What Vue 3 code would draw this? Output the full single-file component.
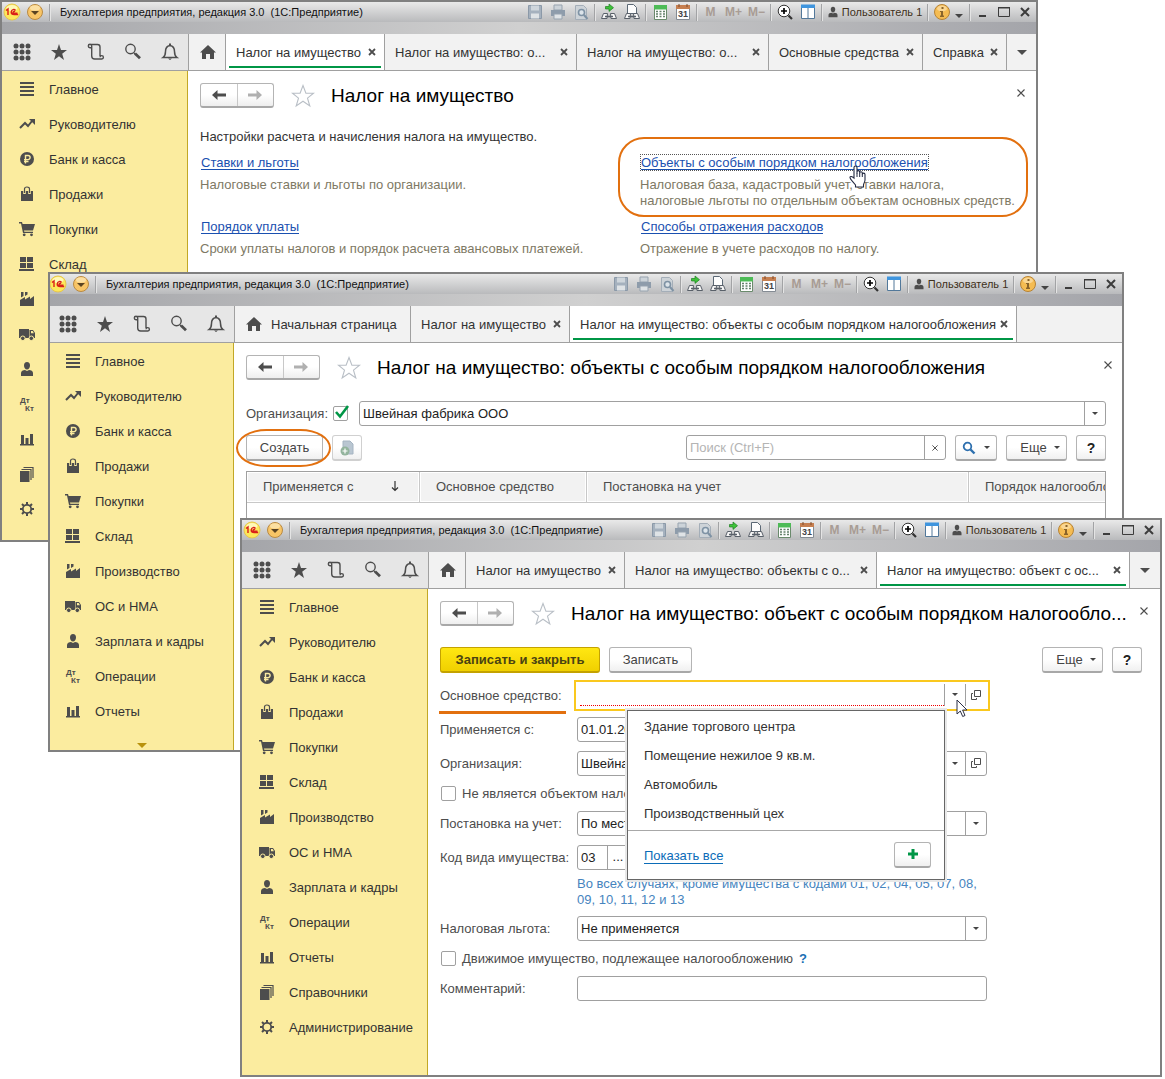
<script setup>
import { ref } from 'vue'

const sections = [
  ['list', 'Главное'],
  ['trend', 'Руководителю'],
  ['ruble', 'Банк и касса'],
  ['bag', 'Продажи'],
  ['cart', 'Покупки'],
  ['store', 'Склад'],
  ['factory', 'Производство'],
  ['truck', 'ОС и НМА'],
  ['person', 'Зарплата и кадры'],
  ['dtkt', 'Операции'],
  ['chart', 'Отчеты'],
  ['books', 'Справочники'],
  ['gear', 'Администрирование'],
]

const windows = [
  {
    id: 'tax',
    heading: 'Налог на имущество',
    sections,
    more: false,
    tabs: [
      { home: true, width: 37 },
      { text: 'Налог на имущество', width: 159, active: true },
      { text: 'Налог на имущество: о...', width: 192 },
      { text: 'Налог на имущество: о...', width: 192 },
      { text: 'Основные средства', width: 154 },
      { text: 'Справка', width: 84 },
    ],
    overflow: true,
  },
  {
    id: 'objects',
    heading: 'Налог на имущество: объекты с особым порядком налогообложения',
    sections: sections.slice(0, 11),
    more: true,
    tabs: [
      { home: true, text: 'Начальная страница', width: 176 },
      { text: 'Налог на имущество', width: 159 },
      { text: 'Налог на имущество: объекты с особым порядком налогообложения', width: 447, active: true },
    ],
    overflow: false,
  },
  {
    id: 'object',
    heading: 'Налог на имущество: объект с особым порядком налогообло...',
    sections,
    more: false,
    tabs: [
      { home: true, width: 37 },
      { text: 'Налог на имущество', width: 159 },
      { text: 'Налог на имущество: объекты с о...', width: 252 },
      { text: 'Налог на имущество: объект с ос...', width: 253, active: true },
    ],
    overflow: true,
  },
]

const tools = ['grid', 'star', 'scroll', 'search', 'bell']
const toolNames = ['Все функции', 'Избранное', 'История', 'Поиск', 'Оповещения']

const links = [
  { text: 'Ставки и льготы', lines: ['Налоговые ставки и льготы по организации.'] },
  {
    text: 'Объекты с особым порядком налогообложения',
    lines: ['Налоговая база, кадастровый учет, ставки налога,', 'налоговые льготы по отдельным объектам основных средств.'],
    marked: true,
  },
  { text: 'Порядок уплаты', lines: ['Сроки уплаты налогов и порядок расчета авансовых платежей.'] },
  { text: 'Способы отражения расходов', lines: ['Отражение в учете расходов по налогу.'] },
]

const assets = ['Здание торгового центра', 'Помещение нежилое 9 кв.м.', 'Автомобиль', 'Производственный цех']

const useOrg = ref(true)
const filter = ref('')
const asset = ref('')
const startDate = ref('01.01.2017')
const organization = ref('Швейная фабрика ООО')
const kindCode = ref('03')
const comment = ref('')
const notTaxed = ref(false)
const movable = ref(false)
</script>

<template>
  <svg class="defs" width="0" height="0" aria-hidden="true">
    <symbol id="i-list" viewBox="0 0 16 16"><path d="M1 1h14v2H1zM1 5h14v2H1zM1 9h14v2H1zM1 13h14v2H1z" /></symbol>
    <symbol id="i-trend" viewBox="0 0 16 16"><path d="M1 12l5-5 3 3 4-5" fill="none" stroke="currentColor" stroke-width="2" /><path d="M10 3h6v6z" /></symbol>
    <symbol id="i-ruble" viewBox="0 0 16 16"><circle cx="8" cy="8" r="7" /><path d="M6.500 12.500V4.500h2.500a2 2 0 0 1 0 4.200H5M5 10.600h4.500" fill="none" stroke="#fbec9f" stroke-width="1.400" /></symbol>
    <symbol id="i-bag" viewBox="0 0 16 16"><path d="M2 5h12v10H2z" /><path d="M5.500 8V3a2.500 2 0 0 1 5 0v5" fill="none" stroke="#fbec9f" stroke-width="2.600" /><path d="M5.500 7V3a2.500 2 0 0 1 5 0v4" fill="none" stroke="currentColor" stroke-width="1.200" /></symbol>
    <symbol id="i-cart" viewBox="0 0 16 16"><path d="M0 1h3l.6 2H16l-2 6.500H5l.3 1.200H14V12H4L2 2.400H0z" /><circle cx="5.200" cy="13.800" r="1.400" /><circle cx="12.500" cy="13.800" r="1.400" /></symbol>
    <symbol id="i-store" viewBox="0 0 16 16"><path d="M1 1h6v5H1zM8 1h6v5H8zM1 7h6v5H1zM8 7h6v5H8zM0 13h15v2H0z" /></symbol>
    <symbol id="i-factory" viewBox="0 0 16 16"><path d="M1 15V9l5-3v2.500L11 5.500V8l4-3v10zM2 1h2.500v4L2 6.500zM6 1h2.500v2.500L6 5z" /></symbol>
    <symbol id="i-truck" viewBox="0 0 16 16"><path d="M0 3h10v9H0zM10.500 4H14l2 3v5h-5.500z" /><path d="M12 5h1.700l1.200 2.300H12z" fill="#fbec9f" /><circle cx="3.800" cy="12.300" r="2.300" stroke="#fbec9f" /><circle cx="12.300" cy="12.300" r="2.300" stroke="#fbec9f" /></symbol>
    <symbol id="i-person" viewBox="0 0 16 16"><path d="M8 1c2 0 3 1.500 3 3.500S9.800 8.500 8 8.500 5 6.500 5 4.500 6 1 8 1zM2 15v-3c0-2 2-2.800 4-3l2 1 2-1c2 .2 4 1 4 3v3z" /></symbol>
    <symbol id="i-dtkt" viewBox="0 0 16 16"><text x="1" y="7" class="mini">Дт</text><text x="6" y="15" class="mini">Кт</text></symbol>
    <symbol id="i-chart" viewBox="0 0 16 16"><path d="M2 4h3v9H2zM6.500 7h3v6h-3zM11 3h3v10h-3zM1 13h14v1.500H1z" /></symbol>
    <symbol id="i-books" viewBox="0 0 16 16"><path d="M1 5h9.500v11H1z" /><path d="M2.500 3.500H12V14M4.500 1.500H14V12" fill="none" stroke="currentColor" stroke-width="1.200" /></symbol>
    <symbol id="i-gear" viewBox="0 0 16 16"><circle cx="8" cy="8" r="4.200" fill="none" stroke="currentColor" stroke-width="1.800" /><path d="M8 4V1M8 15v-3M1 8h3M12 8h3M3 3l2.200 2.200M10.800 10.800L13 13M13 3l-2.200 2.200M5.200 10.800L3 13" stroke="currentColor" stroke-width="2" /></symbol>

    <symbol id="i-grid" viewBox="0 0 20 20"><g><circle v-for="n in 9" :key="n" :cx="4 + ((n - 1) % 3) * 6" :cy="4 + Math.floor((n - 1) / 3) * 6" r="2.500" /></g></symbol>
    <symbol id="i-star" viewBox="0 0 20 20"><path d="M10 2l2 6h6l-4.800 3.800L15 18l-5-3.800L5 18l1.800-6.200L2 8h6z" /></symbol>
    <symbol id="i-scroll" viewBox="0 0 20 20"><path d="M5.700 4a1.700 1.700 0 1 0-1.700 1.700h1.700M4 2.500h7.500q2.500 0 2.500 2.500v9M5.700 4v10q0 3 3 3h7.300M14 15.200a1.700 1.700 0 1 1 1.800 1.800" fill="none" stroke="currentColor" stroke-width="1.400" /></symbol>
    <symbol id="i-search" viewBox="0 0 20 20"><circle cx="7.500" cy="7" r="4.700" fill="none" stroke="currentColor" stroke-width="1.400" /><path d="M11 11l1 1" stroke="currentColor" stroke-width="1.400" /><path d="M12 11.500l5 4.700" stroke="currentColor" stroke-width="2.800" /></symbol>
    <symbol id="i-bell" viewBox="0 0 20 20"><path d="M3 15.500h14c-2-1.500-2.500-3-2.500-6 0-3.500-1.500-5.500-4.500-6-3 .5-4.500 2.500-4.500 6 0 3-.5 4.500-2.500 6z" fill="none" stroke="currentColor" stroke-width="1.500" /><path d="M9 1.500h2v2H9zM8 16.500h4L10 18z" /></symbol>
    <symbol id="i-home" viewBox="0 0 16 16"><path d="M8 1l8 7.500h-2V15h-4v-5H6v5H2V8.500H0z" /></symbol>
    <symbol id="i-close" viewBox="0 0 8 8"><path d="M1 1l6 6M7 1L1 7" stroke="currentColor" stroke-width="1.800" /></symbol>
    <symbol id="i-thin" viewBox="0 0 8 8"><path d="M.5.5l7 7M7.500.5l-7 7" stroke="currentColor" stroke-width="1.100" /></symbol>
    <symbol id="i-down" viewBox="0 0 8 4"><path d="M0 0h8L4 4z" /></symbol>
    <symbol id="i-arrow" viewBox="0 0 14 12"><path d="M0 6l5.500-5v3.600H14v2.800H5.500V11z" /></symbol>
    <symbol id="i-fav" viewBox="0 0 24 24"><path d="M12 1.500l2.900 7.700h7.600l-6 4.900 2.300 7.900-6.800-4.800L5.200 22l2.300-7.900-6-4.900h7.600z" fill="#fff" stroke="#b9bfc6" stroke-width="1.100" /></symbol>
    <symbol id="i-open" viewBox="0 0 10 10"><path d="M3.500.5h6v6h-6zM2 3.500H.5v6h5V8" fill="none" stroke="currentColor" /></symbol>

    <symbol id="t-logo" viewBox="0 0 18 18"><circle cx="9" cy="9" r="8" fill="#fde85a" stroke="#e6c64e" /><ellipse cx="9" cy="5" rx="5.500" ry="3" fill="#fff9b8" /><path d="M3 7.500l2-1.500v6M12.500 7.500c-1-1.500-4-1.500-4.300 1.500 0 2 1.500 2.500 3 2.500h4M12 8.700c-1-.7-2 0-2 .8s.8.8 1.500.8h3" fill="none" stroke="#d9201a" stroke-width="1.400" /></symbol>
    <symbol id="t-menu" viewBox="0 0 18 18"><circle cx="9" cy="9" r="7.500" fill="#f8c566" stroke="#b98a43" /><ellipse cx="9" cy="5" rx="5" ry="2.800" fill="#fce0a2" /><path d="M5 8h8l-4 4z" fill="#5a4422" /></symbol>
    <symbol id="t-save" viewBox="0 0 18 18"><path d="M2.500 2.500h13v13h-13z" fill="#a5b1be" stroke="#8b99a8" /><path d="M5 2.500h8v5H5z" fill="#cfd6dc" /><path d="M5 10.500h8v5H5z" fill="#dfe3e6" /></symbol>
    <symbol id="t-print" viewBox="0 0 18 18"><path d="M5 2h8v5H5z" fill="#ccd3d9" stroke="#97a3af" /><path d="M2 7h14v6H2z" fill="#8e9cab" /><path d="M5 11h8v5H5z" fill="#dfe3e6" stroke="#97a3af" /></symbol>
    <symbol id="t-preview" viewBox="0 0 18 18"><path d="M3.500 2.500h8l3 3v11h-11z" fill="#cdd3d8" stroke="#a4aeb8" /><circle cx="9.500" cy="9.500" r="3" fill="#dce4ea" stroke="#7e92a4" stroke-width="1.600" /><path d="M12 12l3.500 4" stroke="#7e92a4" stroke-width="2" /></symbol>
    <symbol id="t-get" viewBox="0 0 18 18"><path d="M5.500 3.500h3.500V1l4.500 3.700L9 8.400V6H5.500z" fill="#3ec23a" stroke="#1e7f21" stroke-width=".7" /><path d="M3.500 10.500h4l-.5 5H1.500zM10.500 10.500h4l2 5H11z" fill="#f5f5f5" stroke="#596069" /><path d="M5 13.500h8" stroke="#596069" stroke-width="1.500" /></symbol>
    <symbol id="t-put" viewBox="0 0 18 18"><path d="M4.500 1.500h6l3 3v6h-9z" fill="#fdfdfd" stroke="#5b6875" /><path d="M3.500 10.500h4l-.5 5H1.500zM10.500 10.500h4l2 5H11z" fill="#f5f5f5" stroke="#596069" /><path d="M5 13.500h8" stroke="#596069" stroke-width="1.500" /></symbol>
    <symbol id="t-calc" viewBox="0 0 18 18"><path d="M3.500 2.500h12v14h-12z" fill="#fff" stroke="#6a8a6c" /><path d="M3 2h13v4.500H3z" fill="#4dbb56" /><path d="M5 8.500h9M5 11h9M5 13.500h9" stroke="#63806a" stroke-width="1.500" stroke-dasharray="2 1.500" /></symbol>
    <symbol id="t-date" viewBox="0 0 18 18"><path d="M2.500 3.500h13v13h-13z" fill="#fff" stroke="#848b93" /><path d="M2 2h14v4H2z" fill="#c67f50" /><path d="M5 1v3M13 1v3" stroke="#7d4a29" /><text x="9" y="14" text-anchor="middle" class="day">31</text></symbol>
    <symbol id="t-zoom" viewBox="0 0 18 18"><circle cx="8" cy="8" r="5.800" fill="#fff" stroke="#333" /><path d="M8 5v6M5 8h6" stroke="#000" stroke-width="1.700" /><path d="M12.500 12.500l3.500 3.500" stroke="#333" stroke-width="2.200" /></symbol>
    <symbol id="t-split" viewBox="0 0 18 18"><path d="M2.500 2.500h13v13h-13z" fill="#fff" stroke="#52789a" /><path d="M2 1.500h14V5H2z" fill="#3f95de" /><path d="M9 5v11" stroke="#52789a" /></symbol>
    <symbol id="t-info" viewBox="0 0 18 18"><circle cx="9" cy="9" r="7.500" fill="#f5bc52" stroke="#b78335" /><ellipse cx="9" cy="5.500" rx="5" ry="3" fill="#fad692" /><path d="M8.500 4h2v2h-2zM7 8h3v4.500h1V14H7v-1.500h1V9H7z" fill="#8a642a" /></symbol>
    <symbol id="t-min" viewBox="0 0 14 14"><path d="M3 10h7v2H3z" /></symbol>
    <symbol id="t-max" viewBox="0 0 14 14"><path d="M1.500 2.500h11v9h-11z" fill="none" stroke="currentColor" /><path d="M1 2h12v1.500H1z" /></symbol>
    <symbol id="t-exit" viewBox="0 0 14 14"><path d="M3 3l8 8M11 3l-8 8" stroke="currentColor" stroke-width="2" /></symbol>
  </svg>

  <main class="desktop">
    <section v-for="w in windows" :key="w.id" class="window" :class="w.id" :aria-label="w.heading">
      <header class="titlebar">
        <svg class="t18 logo"><use href="#t-logo" /></svg>
        <button class="plain menu" aria-label="Главное меню"><svg class="t18"><use href="#t-menu" /></svg></button>
        <i class="sep first"></i>
        <span class="apptitle">Бухгалтерия предприятия, редакция 3.0&nbsp; (1С:Предприятие)</span>
        <div class="system">
          <span v-for="i in ['save', 'print', 'preview']" :key="i" class="slot"><svg class="t18"><use :href="'#t-' + i" /></svg></span>
          <i class="sep"></i>
          <span v-for="i in ['get', 'put']" :key="i" class="slot"><svg class="t18"><use :href="'#t-' + i" /></svg></span>
          <i class="sep"></i>
          <span v-for="i in ['calc', 'date']" :key="i" class="slot"><svg class="t18"><use :href="'#t-' + i" /></svg></span>
          <i class="sep"></i>
          <span v-for="i in ['M', 'M+', 'M−']" :key="i" class="slot memory">{{ i }}</span>
          <i class="sep"></i>
          <span v-for="i in ['zoom', 'split']" :key="i" class="slot"><svg class="t18"><use :href="'#t-' + i" /></svg></span>
          <i class="sep"></i>
          <span class="user"><svg><use href="#i-person" /></svg>Пользователь 1</span>
          <i class="sep"></i>
          <span class="slot"><svg class="t18"><use href="#t-info" /></svg></span>
          <svg class="tiny"><use href="#i-down" /></svg>
          <i class="sep"></i>
          <button class="plain ctl" aria-label="Свернуть"><svg><use href="#t-min" /></svg></button>
          <button class="plain ctl" aria-label="Развернуть"><svg><use href="#t-max" /></svg></button>
          <button class="plain ctl" aria-label="Закрыть"><svg><use href="#t-exit" /></svg></button>
        </div>
      </header>

      <div class="tabbar">
        <div class="tools">
          <button v-for="(t, n) in tools" :key="t" class="plain tool" :aria-label="toolNames[n]"><svg><use :href="'#i-' + t" /></svg></button>
        </div>
        <nav class="tabs">
          <div v-for="(t, n) in w.tabs" :key="n" class="tab" :class="{ active: t.active, home: t.home }" :style="{ width: t.width + 'px' }">
            <svg v-if="t.home" class="house"><use href="#i-home" /></svg>
            <span v-if="t.text" class="caption">{{ t.text }}</span>
            <button v-if="!t.home" class="plain shut" aria-label="Закрыть вкладку"><svg><use href="#i-close" /></svg></button>
          </div>
          <button v-if="w.overflow" class="plain all" aria-label="Все вкладки"><svg><use href="#i-down" /></svg></button>
        </nav>
      </div>

      <div class="body">
        <nav class="side">
          <a v-for="s in w.sections" :key="s[1]" href="#" class="item"><svg><use :href="'#i-' + s[0]" /></svg><span class="caption">{{ s[1] }}</span></a>
          <button v-if="w.more" class="plain more" aria-label="Еще разделы"><svg><use href="#i-down" /></svg></button>
        </nav>

        <div class="content">
          <div class="pagehead">
            <div class="history">
              <button aria-label="Назад"><svg><use href="#i-arrow" /></svg></button>
              <button aria-label="Вперед" disabled><svg class="flip"><use href="#i-arrow" /></svg></button>
            </div>
            <svg class="fav"><use href="#i-fav" /></svg>
            <h1>{{ w.heading }}</h1>
            <button class="plain leave" aria-label="Закрыть"><svg><use href="#i-thin" /></svg></button>
          </div>

          <template v-if="w.id === 'tax'">
            <p class="intro">Настройки расчета и начисления налога на имущество.</p>
            <div class="links">
              <div v-for="l in links" :key="l.text" class="linkcell" :class="{ marked: l.marked }">
                <a href="#">{{ l.text }}</a>
                <p><span v-for="line in l.lines" :key="line">{{ line }}</span></p>
                <svg v-if="l.marked" class="hand" viewBox="0 0 17 23" aria-hidden="true"><path d="M5 13V2.500a1.500 1.500 0 0 1 3 0V8.500V7a1.300 1.300 0 0 1 2.700 0v2V8a1.300 1.300 0 0 1 2.600 0v2V9.500a1.300 1.300 0 0 1 2.700 0V15c0 2-1.500 3.500-1.500 5v2H6.500v-2C5.500 18 1 14.500 1 12.500c0-1.500 2-1.500 4 .5z" fill="#fff" stroke="#222840" stroke-width="1.100" /><path d="M8 8v4M10.700 9v3M13.300 10v2" stroke="#222840" /></svg>
              </div>
            </div>
          </template>

          <template v-else-if="w.id === 'objects'">
            <div class="orgline">
              <label for="use-org">Организация:</label>
              <span class="tick"><input id="use-org" v-model="useOrg" type="checkbox" /><svg viewBox="0 0 16 16" aria-hidden="true"><path d="M2 8l4 4.500L14 2" fill="none" stroke="#009646" stroke-width="2.600" /></svg></span>
              <div class="field">
                <select v-model="organization" aria-label="Организация"><option>Швейная фабрика ООО</option></select>
                <span class="part"><svg class="caret"><use href="#i-down" /></svg></span>
              </div>
            </div>
            <div class="commands">
              <span class="create"><button class="btn">Создать</button></span>
              <button class="btn copy" aria-label="Скопировать" disabled><svg viewBox="0 0 16 16"><path d="M4 1h7l3 3v10H4z" fill="#b9c6d1" stroke="#a5b4c2" /><circle cx="6" cy="11" r="4.500" fill="#93b49d" /><path d="M6 8.500v5M3.500 11h5" stroke="#fff" stroke-width="1.200" /></svg></button>
              <div class="field find">
                <input v-model="filter" type="text" placeholder="Поиск (Ctrl+F)" aria-label="Поиск" />
                <button class="part" aria-label="Очистить"><svg class="wipe"><use href="#i-thin" /></svg></button>
              </div>
              <button class="btn lens" aria-label="Найти"><svg class="glass" viewBox="0 0 14 14"><circle cx="5.500" cy="5.500" r="3.800" fill="none" stroke="#2d6fae" stroke-width="1.800" /><path d="M8.500 8.500l4 4" stroke="#2d6fae" stroke-width="2.400" /></svg><svg class="caret"><use href="#i-down" /></svg></button>
              <button class="btn extra">Еще<svg class="caret"><use href="#i-down" /></svg></button>
              <button class="btn help">?</button>
            </div>
            <div class="gridbox">
              <table>
                <thead>
                  <tr>
                    <th class="c1">Применяется с<svg viewBox="0 0 8 12" aria-hidden="true"><path d="M4 1v9M1 7.500l3 3 3-3" fill="none" stroke="#333" stroke-width="1.200" /></svg></th>
                    <th class="c2">Основное средство</th>
                    <th class="c3">Постановка на учет</th>
                    <th class="c4">Порядок налогообложения</th>
                  </tr>
                </thead>
              </table>
            </div>
          </template>

          <template v-else>
            <div class="actions">
              <button class="btn primary">Записать и закрыть</button>
              <button class="btn save">Записать</button>
              <button class="btn extra">Еще<svg class="caret"><use href="#i-down" /></svg></button>
              <button class="btn help">?</button>
            </div>
            <form class="form" @submit.prevent>
              <div class="row">
                <label for="asset" class="wanted">Основное средство:</label>
                <div class="combo">
                  <div class="field focus">
                    <input id="asset" v-model="asset" type="text" />
                    <button type="button" class="part" aria-label="Выбрать"><svg class="caret"><use href="#i-down" /></svg></button>
                    <button type="button" class="part" aria-label="Открыть"><svg class="open"><use href="#i-open" /></svg></button>
                  </div>
                  <div class="popup">
                    <ul>
                      <li v-for="a in assets" :key="a">{{ a }}</li>
                    </ul>
                    <div class="foot">
                      <a href="#">Показать все</a>
                      <button type="button" class="btn add" aria-label="Создать"><svg viewBox="0 0 12 12"><path d="M4.500 1h3v3.500H11v3H7.500V11h-3V7.500H1v-3h3.500z" fill="#009646" /></svg></button>
                    </div>
                  </div>
                  <svg class="pointer" viewBox="0 0 12 19" aria-hidden="true"><path d="M1 1v14l3.300-3 2.400 5.500 2.300-1L6.600 11H11z" fill="#fff" stroke="#2b2f45" /></svg>
                </div>
              </div>
              <div class="row">
                <label for="start">Применяется с:</label>
                <div class="field date"><input id="start" v-model="startDate" type="text" /></div>
              </div>
              <div class="row">
                <label for="org">Организация:</label>
                <div class="field">
                  <input id="org" v-model="organization" type="text" />
                  <button type="button" class="part" aria-label="Выбрать"><svg class="caret"><use href="#i-down" /></svg></button>
                  <button type="button" class="part" aria-label="Открыть"><svg class="open"><use href="#i-open" /></svg></button>
                </div>
              </div>
              <div class="check">
                <input id="not-taxed" v-model="notTaxed" type="checkbox" />
                <label for="not-taxed">Не является объектом налогообложения</label>
              </div>
              <div class="row">
                <label for="place">Постановка на учет:</label>
                <div class="field">
                  <select id="place"><option>По месту нахождения</option></select>
                  <span class="part"><svg class="caret"><use href="#i-down" /></svg></span>
                </div>
              </div>
              <div class="row">
                <label for="code">Код вида имущества:</label>
                <div class="field code">
                  <input id="code" v-model="kindCode" type="text" />
                  <button type="button" class="part" aria-label="Выбрать код">...</button>
                </div>
              </div>
              <p class="note">Во всех случаях, кроме имущества с кодами 01, 02, 04, 05, 07, 08, 09, 10, 11, 12 и 13</p>
              <div class="row">
                <label for="relief">Налоговая льгота:</label>
                <div class="field">
                  <select id="relief"><option>Не применяется</option></select>
                  <span class="part"><svg class="caret"><use href="#i-down" /></svg></span>
                </div>
              </div>
              <div class="check">
                <input id="movable" v-model="movable" type="checkbox" />
                <label for="movable">Движимое имущество, подлежащее налогообложению</label>
                <a href="#" class="hint">?</a>
              </div>
              <div class="row">
                <label for="comment">Комментарий:</label>
                <div class="field"><input id="comment" v-model="comment" type="text" /></div>
              </div>
            </form>
          </template>
        </div>
      </div>
    </section>
  </main>
</template>

<style>
body {
  margin: 0;
  background: #fff;
}
</style>

<style scoped>
.defs {
  position: absolute;
}
.mini {
  font: bold 8px "Liberation Sans", Arial, sans-serif;
}
.day {
  font: bold 9px "Liberation Sans", Arial, sans-serif;
  fill: #444;
}
.desktop {
  display: grid;
  font: 13px/16px "Liberation Sans", Arial, sans-serif;
  color: #333;
}
button,
input,
select {
  font: inherit;
  color: inherit;
  margin: 0;
}
svg {
  display: block;
  flex: none;
  fill: currentColor;
}
.window {
  --side: 186px;
  --shift: 0px;
  grid-area: 1 / 1;
  align-self: start;
  box-sizing: border-box;
  min-width: 0;
  overflow: hidden;
  border: 2px solid #808080;
  background: #fff;
}
.tax {
  margin-right: 127px;
}
.objects {
  --side: 184px;
  --shift: 2px;
  margin: 272px 41px 0 48px;
}
.object {
  margin: 518px 3px 0 240px;
}
.plain {
  display: flex;
  align-items: center;
  justify-content: center;
  padding: 0;
  border: 0;
  background: none;
}
.caption {
  padding-top: 2px;
}

/* title bar */
.titlebar {
  display: flex;
  align-items: center;
  height: 20px;
  padding-bottom: 12px;
  background:
    linear-gradient(#e9e9e9, #b9babc) 0 0 / 100% 20px no-repeat,
    linear-gradient(90deg, #a4a5a9, #d0d0d0 50%, #a4a5aa);
}
.t18 {
  width: 18px;
  height: 18px;
}
.logo {
  margin-left: calc(1px - var(--shift));
}
.menu {
  margin-left: 5px;
  width: 18px;
}
.sep {
  flex: none;
  width: 1px;
  height: 17px;
  margin: 0 1px 0 2px;
  background: #a2a3a5;
  border-right: 1px solid #e4e4e4;
}
.first {
  margin: 0 9px 0 5px;
}
.apptitle {
  flex: 1;
  min-width: 0;
  font-size: 11px;
  color: #111;
  white-space: nowrap;
  overflow: hidden;
}
.system {
  display: flex;
  align-items: center;
  height: 20px;
  padding-right: 1px;
}
.slot {
  width: 23px;
  display: flex;
  justify-content: center;
}
.memory {
  font-weight: bold;
  font-size: 12px;
  color: #a89c94;
}
.user {
  display: flex;
  align-items: center;
  justify-content: center;
  gap: 3px;
  width: 101px;
  font-size: 11px;
  color: #40301a;
  white-space: nowrap;
}
.user svg {
  width: 12px;
  height: 12px;
  color: #4d4d4d;
}
.tiny {
  width: 8px;
  height: 4px;
  margin: 8px 4px 0 2px;
  color: #444;
}
.ctl {
  width: 21px;
  height: 18px;
  color: #3c3c3c;
}
.ctl svg {
  width: 14px;
  height: 14px;
}

/* tool and tab strip */
.tabbar {
  display: flex;
  height: 36px;
  border-bottom: 1px solid #a0a0a0;
  background: #f2f2f2;
  white-space: nowrap;
}
.tools {
  flex: none;
  display: flex;
  justify-content: flex-end;
  width: var(--side);
  background: #e6e6e6;
}
.tool {
  width: 37px;
  color: #4d4d4d;
}
.tool svg {
  width: 20px;
  height: 20px;
}
.tabs {
  display: flex;
  flex: 1;
  min-width: 0;
  border-left: 1px solid #a0a0a0;
}
.tab {
  flex: none;
  box-sizing: border-box;
  display: flex;
  align-items: center;
  justify-content: space-between;
  padding: 0 8px 0 10px;
  border-right: 1px solid #a0a0a0;
  position: relative;
}
.tab.home {
  justify-content: flex-start;
  gap: 9px;
  padding-left: 11px;
}
.active {
  background: #fff;
}
.active::after {
  content: "";
  position: absolute;
  left: 3px;
  right: 3px;
  bottom: 2px;
  height: 2px;
  background: #009646;
}
.house {
  width: 16px;
  height: 16px;
  color: #4d4d4d;
}
.shut svg {
  width: 8px;
  height: 8px;
  color: #4d4d4d;
}
.all {
  width: 30px;
  color: #4d4d4d;
}
.all svg {
  width: 10px;
  height: 5px;
}

/* sections */
.body {
  display: flex;
}
.side {
  flex: none;
  box-sizing: border-box;
  width: var(--side);
  border-right: 1px solid #c2a826;
  background: #fbec9f;
}
.tax .side {
  padding-bottom: 14px;
}
.object .side {
  padding-bottom: 31px;
}
.item {
  display: flex;
  align-items: center;
  gap: 14px;
  height: 35px;
  padding-left: calc(17px - var(--shift));
  color: #333;
  text-decoration: none;
  white-space: nowrap;
}
.item svg {
  width: 16px;
  height: 16px;
  color: #4d4d4d;
}
.more {
  width: 100%;
  height: 22px;
  padding-top: 15px;
  align-items: flex-start;
  box-sizing: border-box;
  color: #b8920c;
}
.more svg {
  width: 10px;
  height: 5px;
}

/* page area */
.content {
  flex: 1;
  min-width: 0;
  display: flex;
  flex-direction: column;
  padding: 12px 18px 0 12px;
}
.objects .content {
  padding-right: 16px;
}
.tax .content {
  padding-right: 8px;
}
.pagehead {
  display: flex;
  height: 25px;
  align-items: center;
}
.history {
  display: flex;
  box-sizing: border-box;
  width: 74px;
  height: 25px;
  border: 1px solid #b4b4b4;
  border-bottom: 2px solid #a8a8a8;
  border-radius: 3px;
  background: linear-gradient(#fff 50%, #eee);
}
.history button {
  display: flex;
  flex: 1;
  align-items: center;
  justify-content: center;
  padding: 0;
  border: 0;
  background: none;
  color: #4d4d4d;
}
.history button + button {
  border-left: 1px solid #c8c8c8;
  color: #b0b0b0;
}
.history svg {
  width: 14px;
  height: 12px;
}
.flip {
  transform: rotate(180deg);
}
.fav {
  width: 24px;
  height: 24px;
  margin: 0 16px 0 17px;
}
h1 {
  flex: 1;
  min-width: 0;
  margin: 0;
  padding-top: 1px;
  font-size: 19px;
  line-height: 24px;
  font-weight: normal;
  color: #000;
  white-space: nowrap;
}
.leave {
  align-self: flex-start;
  width: 20px;
  height: 20px;
  margin-right: -12px;
}
.leave svg {
  width: 8px;
  height: 8px;
  color: #4d4d4d;
}
.tax .leave {
  margin-right: -3px;
}
.intro {
  margin: 21px 0 10px;
  color: #333;
}
.links {
  display: grid;
  grid-template-columns: 440px 1fr;
  row-gap: 10px;
  white-space: nowrap;
}
.linkcell {
  position: relative;
  color: #7e7964;
}
.linkcell a {
  display: inline-block;
  margin-left: 1px;
  height: 14px;
  line-height: 16px;
  color: #1a50b0;
  text-decoration: none;
  border-bottom: 1px solid #1a50b0;
}
.linkcell p {
  margin: 6px 0 0;
}
.linkcell span {
  display: block;
}
.marked a {
  outline: 1px dotted #555;
}
.marked::before {
  content: "";
  position: absolute;
  inset: -18px 0 -8px -22px;
  border: 2px solid #e2700f;
  border-radius: 26px;
}
.hand {
  position: absolute;
  left: 209px;
  top: 10px;
  width: 17px;
  height: 23px;
}

/* fields and buttons */
.field {
  box-sizing: border-box;
  display: flex;
  flex: 1;
  min-width: 0;
  height: 25px;
  border: 1px solid #a0a0a0;
  border-radius: 3px;
  background: #fff;
}
.field input,
.field select {
  flex: 1;
  min-width: 0;
  width: 0;
  padding: 1px 3px 0;
  border: 0;
  background: none;
  outline: 0;
  appearance: none;
}
.field input::placeholder {
  color: #b4b4b4;
}
.part {
  box-sizing: border-box;
  flex: none;
  display: flex;
  align-items: center;
  justify-content: center;
  width: 21px;
  padding: 0;
  border: 0;
  border-left: 1px solid #a0a0a0;
  background: none;
}
.caret {
  width: 6px;
  height: 3px;
  color: #444;
}
.open {
  width: 10px;
  height: 10px;
  color: #4d4d4d;
}
.wipe {
  width: 6px;
  height: 6px;
}
.btn {
  box-sizing: border-box;
  flex: none;
  display: flex;
  align-items: center;
  justify-content: center;
  height: 26px;
  padding: 0 13px;
  border: 1px solid #b4b4b4;
  border-bottom: 2px solid #a8a8a8;
  border-radius: 3px;
  background: linear-gradient(#fff 50%, #f0f0f0);
  color: #444;
  white-space: nowrap;
}
.extra {
  width: 61px;
  gap: 7px;
  padding: 0 5px 0 12px;
}
.help {
  width: 30px;
  padding: 0;
  margin-left: 9px;
  font-weight: bold;
  font-size: 14px;
  color: #222;
}
.orgline {
  display: flex;
  align-items: center;
  margin-top: 21px;
  color: #4d4d4d;
}
.orgline label {
  width: 87px;
}
.orgline .field {
  margin-left: 11px;
  color: #222;
}
input[type="checkbox"] {
  appearance: none;
  display: block;
  box-sizing: border-box;
  width: 15px;
  height: 15px;
  border: 1px solid #a0a0a0;
  border-radius: 2px;
  background: #fff;
}
.tick {
  position: relative;
}
.tick svg {
  position: absolute;
  left: 1px;
  top: -2px;
  width: 16px;
  height: 16px;
  pointer-events: none;
}
.commands {
  display: flex;
  margin-top: 9px;
}
.create {
  position: relative;
}
.create .btn {
  width: 77px;
}
.create::after {
  content: "";
  position: absolute;
  inset: -6px -8px -6px -10px;
  border: 2px solid #e2700f;
  border-radius: 32px / 20px;
  pointer-events: none;
}
.copy {
  width: 30px;
  margin-left: 9px;
  padding: 0;
  border-color: #d0d0d0;
}
.copy svg {
  width: 16px;
  height: 16px;
}
.find {
  flex: 0 1 260px;
  margin-left: auto;
}
.lens {
  width: 42px;
  gap: 8px;
  padding: 0;
  margin: 0 9px;
}
.glass {
  width: 14px;
  height: 14px;
}
.gridbox {
  flex: 1;
  margin-top: 10px;
  overflow: hidden;
  border: 1px solid #a0a0a0;
  border-bottom: 0;
}
table {
  table-layout: fixed;
  width: 1000px;
  border-collapse: separate;
  border-spacing: 0;
}
th {
  position: relative;
  box-sizing: border-box;
  height: 31px;
  padding: 0 0 0 16px;
  border-right: 1px solid #c8c8c8;
  border-bottom: 1px solid #c8c8c8;
  background: #f2f2f2;
  box-shadow: inset 0 0 0 1px #fff;
  font-weight: normal;
  text-align: left;
  color: #4d4d4d;
}
th svg {
  position: absolute;
  right: 20px;
  top: 8px;
  width: 8px;
  height: 12px;
}
.c1 {
  width: 173px;
}
.c2 {
  width: 167px;
}
.c3 {
  width: 382px;
}

/* object form */
.actions {
  display: flex;
  margin-top: 21px;
}
.primary {
  width: 160px;
  padding: 0;
  border-color: #c4a200;
  background: linear-gradient(#ffe712, #f0d000);
  font-weight: bold;
  color: #4a4312;
}
.save {
  width: 83px;
  padding: 0;
  margin-left: 9px;
}
.actions .extra {
  margin-left: auto;
}
.form {
  width: 547px;
  margin-top: 5px;
  color: #4d4d4d;
}
.row {
  display: flex;
  align-items: center;
  height: 34px;
}
.row > label {
  flex: none;
  position: relative;
  width: 137px;
  padding-top: 2px;
  white-space: nowrap;
}
.wanted::after {
  content: "";
  position: absolute;
  left: -1px;
  top: 25px;
  width: 127px;
  height: 3px;
  background: #e2700f;
}
.row .field {
  color: #222;
}
.combo {
  position: relative;
  flex: 1;
  margin: 0 -3px;
}
.focus {
  height: 31px;
  padding: 2px 2px 3px 4px;
  border: 2px solid #fac81e;
  border-radius: 0;
}
.row .focus input {
  border-bottom: 1px dotted #f00000;
  height: 19px;
  padding: 0;
  margin-top: 2px;
}
.date {
  max-width: 140px;
}
.code {
  max-width: 52px;
}
.check {
  display: flex;
  align-items: center;
  gap: 6px;
  height: 26px;
  padding-left: 1px;
  white-space: nowrap;
}
.check label {
  padding-top: 2px;
}
.hint {
  padding-top: 2px;
  color: #1a6fb4;
  font-weight: bold;
  text-decoration: none;
}
.note {
  margin: 0 0 0 137px;
  padding: 2px 0 3px;
  color: #4684be;
}
.popup {
  position: absolute;
  z-index: 1;
  left: 53px;
  top: 30px;
  width: 318px;
  height: 170px;
  box-sizing: border-box;
  border: 1px solid #666;
  background: #fff;
  box-shadow: 0 0 0 2px #e8e8e8;
  color: #333;
}
.popup ul {
  margin: 0;
  padding: 1px 0 2px;
  list-style: none;
  border-bottom: 1px solid #a8a8a8;
}
.popup li {
  padding: 7px 16px 6px;
}
.foot {
  display: flex;
  align-items: center;
  justify-content: space-between;
  padding: 11px 13px 0 16px;
}
.foot a {
  height: 15px;
  margin-top: 3px;
  color: #0b6cb8;
  text-decoration: none;
  border-bottom: 1px solid #0b6cb8;
}
.add {
  width: 37px;
  padding: 0;
}
.add svg {
  width: 12px;
  height: 12px;
}
.pointer {
  position: absolute;
  z-index: 2;
  left: 382px;
  top: 19px;
  width: 12px;
  height: 19px;
}
</style>
